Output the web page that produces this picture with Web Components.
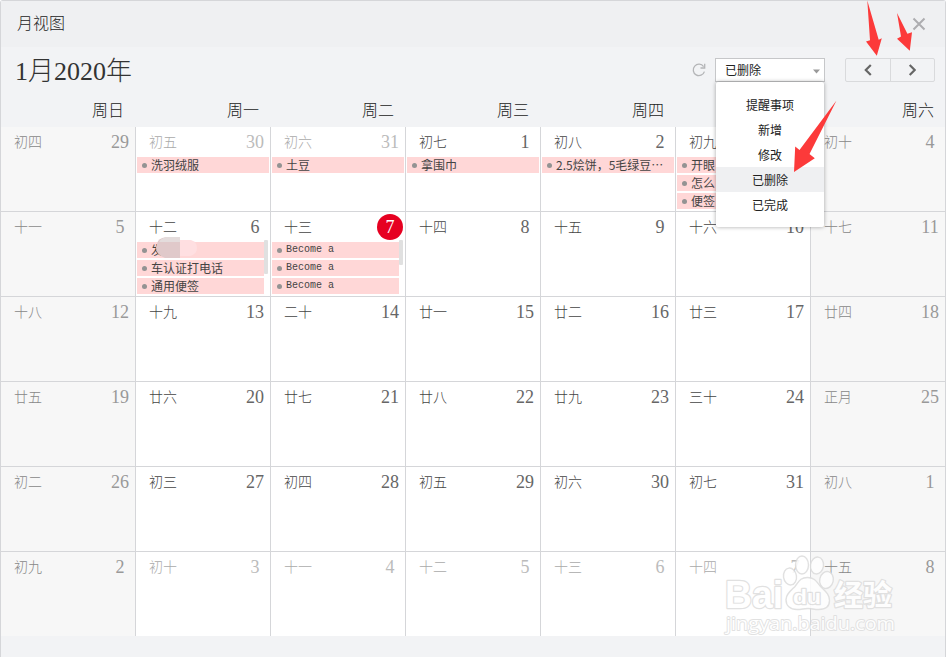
<!DOCTYPE html>
<html lang="zh-CN">
<head>
<meta charset="UTF-8">
<title>月视图</title>
<style>
    body {
        margin: 0;
        width: 946px;
        height: 657px;
        overflow: hidden;
        position: relative;
        font-family: "Liberation Serif", "Noto Sans CJK SC", serif;
        color: #333;
    }
</style>
</head>
<body>
<month-window heading="月视图">
    <calendar-toolbar slot="toolbar" heading="1月2020年"></calendar-toolbar>
    <month-grid slot="content"></month-grid>
</month-window>
<site-watermark></site-watermark>
<arrow-marks></arrow-marks>

<script>
class MonthWindow extends HTMLElement {
    constructor() {
        super();
        this.attachShadow({ mode: 'open' });
        this.shadowRoot.innerHTML = `
            <style>
                :host {
                    display: flex;
                    flex-direction: column;
                    box-sizing: border-box;
                    width: 946px;
                    height: 657px;
                    border: 1px solid #d5d6d9;
                    border-bottom: 0;
                    border-radius: 3px 3px 0 0;
                    background: #f2f3f5;
                }
                header {
                    display: flex;
                    justify-content: space-between;
                    align-items: center;
                    box-sizing: border-box;
                    height: 46px;
                    padding: 0 19px 4px 16px;
                    background: #eff0f2;
                    color: #222;
                    font: 300 16px/24px "Noto Sans CJK SC", sans-serif;
                }
                svg { display: block; margin-top: 4px; }
            </style>
            <header>
                <span>${this.getAttribute('heading')}</span>
                <svg width="14" height="14" viewBox="0 0 14 14" stroke="#adadb0" stroke-width="2">
                    <path d="M1.5 1.5l11 11M12.5 1.5l-11 11"/>
                </svg>
            </header>
            <slot name="toolbar"></slot>
            <slot name="content"></slot>
        `;
    }
}

class CalendarToolbar extends HTMLElement {
    constructor() {
        super();
        this.attachShadow({ mode: 'open' });
        this.shadowRoot.innerHTML = `
            <style>
                :host {
                    display: flex;
                    align-items: center;
                    box-sizing: border-box;
                    height: 46px;
                    padding: 0 10px 0 14px;
                }
                h1 {
                    flex: 1;
                    margin: 0;
                    padding-top: 3px;
                    font-size: 26px;
                    line-height: 43px;
                    font-weight: 300;
                }
                .refresh { display: block; margin-right: 9px; }
                filter-select { margin-right: 20px; }
                .nav {
                    display: flex;
                    box-sizing: border-box;
                    width: 90px;
                    height: 24px;
                    border: 1px solid #d9dadc;
                    border-radius: 2px;
                }
                .nav span {
                    flex: 1;
                    display: flex;
                    align-items: center;
                    justify-content: center;
                }
                .nav span + span { border-left: 1px solid #d9dadc; }
            </style>
            <h1>${this.getAttribute('heading')}</h1>
            <svg class="refresh" width="14" height="14" viewBox="0 0 14 14" fill="none" stroke="#b4b5b7" stroke-width="1.3">
                <path d="M12.4 8.6A5.7 5.7 0 1 1 11.6 3.6"/>
                <path d="M12.7 .8v4.2H8.5"/>
            </svg>
            <filter-select></filter-select>
            <div class="nav">
                <span><svg width="8" height="12" viewBox="0 0 8 12" fill="none" stroke="#666" stroke-width="2.2"><path d="M6.8 1L1.8 6l5 5"/></svg></span>
                <span><svg width="8" height="12" viewBox="0 0 8 12" fill="none" stroke="#666" stroke-width="2.2"><path d="M1.7 1l5 5-5 5"/></svg></span>
            </div>
        `;
    }
}

class FilterSelect extends HTMLElement {
    constructor() {
        super();
        this.attachShadow({ mode: 'open' });
        this.options = ['提醒事项', '新增', '修改', '已删除', '已完成'];
        this.value = '已删除';
        this.shadowRoot.innerHTML = `
            <style>
                :host {
                    display: block;
                    position: relative;
                    width: 110px;
                    font: 12px/25px "Noto Sans CJK SC", sans-serif;
                    color: #222;
                }
                .field {
                    display: flex;
                    align-items: center;
                    justify-content: space-between;
                    box-sizing: border-box;
                    height: 24px;
                    padding: 0 4px 0 9px;
                    border: 1px solid #c6c7c9;
                    background: #fff;
                    line-height: 22px;
                }
                .field span { margin-top: -1px; }
                .field svg { margin-top: 2px; }
                .menu {
                    position: absolute;
                    z-index: 5;
                    left: 1px;
                    top: 24px;
                    width: 108px;
                    padding: 10px 0;
                    border-radius: 2px;
                    background: #fff;
                    box-shadow: 0 0 4px rgba(0, 0, 0, .35);
                    text-align: center;
                }
                .selected { background: #eff0f2; }
            </style>
            <div class="field">
                <span>${this.value}</span>
                <svg width="7" height="5" viewBox="0 0 7 5"><path d="M0 .5h7L3.5 4.5z" fill="#999"/></svg>
            </div>
            <div class="menu">
                ${this.options.map(o => `<div class="${o === this.value ? 'selected' : ''}">${o}</div>`).join('')}
            </div>
        `;
    }
}

class MonthGrid extends HTMLElement {
    constructor() {
        super();
        this.attachShadow({ mode: 'open' });
        const weekdays = ['周日', '周一', '周二', '周三', '周四', '', '周六'];
        // lunar labels, one row per week
        const lunar = [
            '初四 初五 初六 初七 初八 初九 初十',
            '十一 十二 十三 十四 十五 十六 十七',
            '十八 十九 二十 廿一 廿二 廿三 廿四',
            '廿五 廿六 廿七 廿八 廿九 三十 正月',
            '初二 初三 初四 初五 初六 初七 初八',
            '初九 初十 十一 十二 十三 十四 十五'
        ].join(' ').split(' ');
        const events = {
            1: ['洗羽绒服'],
            2: ['土豆'],
            3: ['拿围巾'],
            4: ['2.5烩饼，5毛绿豆…'],
            5: ['开眼', '怎么', '便签'],
            8: ['发', '车认证打电话', '通用便签'],
            9: ['Become a', 'Become a', 'Become a']
        };
        const scroll = { 8: 34, 9: 25 };
        const start = new Date(2019, 11, 29);
        const cells = lunar.map((label, i) => {
            const date = new Date(start.getFullYear(), start.getMonth(), start.getDate() + i);
            const classes = [];
            if (i % 7 === 0 || i % 7 === 6) classes.push('weekend');
            if (date.getMonth() !== 0) classes.push('other');
            if (i === 9) classes.push('today');
            if (i >= 35) classes.push('last');
            return `
                <day-cell class="${classes.join(' ')}" lunar="${label}" day="${date.getDate()}" scroll="${scroll[i] || 0}">
                    ${(events[i] || []).map((t, n) => `<event-item${i === 8 && n === 0 ? ' smudged' : ''}${i === 9 ? ' latin' : ''}>${t}</event-item>`).join('')}
                </day-cell>`;
        });
        this.shadowRoot.innerHTML = `
            <style>
                :host { display: block; }
                .weekdays, .days {
                    display: grid;
                    grid-template-columns: repeat(6, 135px) 134px;
                }
                .weekdays {
                    height: 34px;
                    color: #222;
                    font: 300 16px/32px "Noto Sans CJK SC", sans-serif;
                }
                .weekdays span { padding-left: 91px; }
                .days { grid-template-rows: repeat(5, 85px) 84px; }
            </style>
            <div class="weekdays">${weekdays.map(d => `<span>${d}</span>`).join('')}</div>
            <div class="days">${cells.join('')}</div>
        `;
    }
}

class DayCell extends HTMLElement {
    constructor() {
        super();
        this.attachShadow({ mode: 'open' });
    }

    connectedCallback() {
        const thumb = Number(this.getAttribute('scroll'));
        this.shadowRoot.innerHTML = `
            <style>
                :host {
                    display: flex;
                    flex-direction: column;
                    box-sizing: border-box;
                    min-width: 0;
                    border-right: 1px solid #d5d6d9;
                    border-bottom: 1px solid #d5d6d9;
                    background: #fff;
                    color: #444;
                    --day-color: #666;
                }
                :host(.other) { color: #aaa; --day-color: #bbb; }
                :host(.weekend) { background: #f7f7f7; color: #888; --day-color: #999; }
                :host(:nth-child(7n)) { border-right: 0; }
                :host(.last) { border-bottom: 0; }
                .head {
                    display: flex;
                    justify-content: space-between;
                    height: 28px;
                    padding-left: 13px;
                }
                .lunar { font: 300 14px/28px "Noto Sans CJK SC", sans-serif; }
                .day {
                    width: 26px;
                    height: 26px;
                    margin: 2px 2px 0 0;
                    border-radius: 50%;
                    color: var(--day-color);
                    font-size: 18px;
                    line-height: 27px;
                    text-align: center;
                }
                :host(.today) .day { background: #e60021; color: #fff; }
                .body { display: flex; padding: 0 1px; }
                .list {
                    flex: 1;
                    display: flex;
                    flex-direction: column;
                    gap: 2px;
                    padding-top: 2px;
                }
                .thumb {
                    width: 4px;
                    margin-right: 1px;
                    border-radius: 1px;
                    background: #e0e0e0;
                }
            </style>
            <div class="head">
                <span class="lunar">${this.getAttribute('lunar')}</span>
                <span class="day">${this.getAttribute('day')}</span>
            </div>
            <div class="body">
                <div class="list"><slot></slot></div>
                ${thumb ? `<div class="thumb" style="height: ${thumb}px"></div>` : ''}
            </div>
        `;
    }
}

class EventItem extends HTMLElement {
    constructor() {
        super();
        this.attachShadow({ mode: 'open' });
        this.shadowRoot.innerHTML = `
            <style>
                :host {
                    display: flex;
                    align-items: center;
                    position: relative;
                    height: 16px;
                    background: #ffd7d7;
                    color: #444;
                    font: 12px/16px "Noto Sans CJK SC", sans-serif;
                    white-space: nowrap;
                }
                :host([latin]) { font: 10px/18px "Liberation Mono", monospace; }
                i {
                    width: 5px;
                    height: 5px;
                    margin: 1px 4px 0 5px;
                    border-radius: 50%;
                    background: #939393;
                }
                .smudge { display: none; }
                :host([smudged]) .smudge {
                    display: block;
                    position: absolute;
                    left: 18px;
                    top: -5px;
                }
            </style>
            <i></i><slot></slot>
            <svg class="smudge" width="43" height="22" viewBox="0 0 43 22">
                <path d="M23 3h13q6 2 6 8t-7 8H23z" fill="#ffdfe1"/>
                <path d="M3 4Q6 0 14 0h11v21H10Q1 18 1 10z" fill="#e0c9ca"/>
                <path d="M4 5Q7 0 14 0h11v5z" fill="#e4dcdc"/>
            </svg>
        `;
    }
}

class SiteWatermark extends HTMLElement {
    constructor() {
        super();
        this.attachShadow({ mode: 'open' });
        this.shadowRoot.innerHTML = `
            <style>
                :host {
                    position: absolute;
                    left: 720px;
                    top: 550px;
                    pointer-events: none;
                }
                svg { display: block; }
                text { paint-order: stroke; stroke-linejoin: round; }
            </style>
            <svg width="180" height="90" fill="#fff" stroke="#dcdcdc" stroke-width="2.4">
                <g opacity=".85">
                    <text x="5" y="58" font-family="Liberation Sans" font-weight="bold" font-size="38" textLength="58" lengthAdjust="spacingAndGlyphs">Bai</text>
                    <g stroke-width="1.4">
                        <ellipse cx="70" cy="26.5" rx="6.5" ry="8.5" transform="rotate(-8 70 26.5)"/>
                        <ellipse cx="82" cy="15" rx="6.5" ry="9"/>
                        <ellipse cx="97" cy="15.5" rx="6.5" ry="8.5" transform="rotate(8 97 15.5)"/>
                        <ellipse cx="106.5" cy="30" rx="6.8" ry="8.5" transform="rotate(12 106.5 30)"/>
                        <path d="M87.500 27.500c7 0 9 4 13 9 5 5 9 8 9 14 0 6-4 9-11 9-4 0-7-1-10.500-1s-7 1-11 1c-7 0-11-4-11-10 0-5 4-8 9-13 4-5 5-9 12.500-9z"/>
                    </g>
                    <text x="73" y="54" font-family="Liberation Sans" font-weight="bold" font-size="21" textLength="28" lengthAdjust="spacingAndGlyphs">du</text>
                    <text x="114" y="56" font-family="Noto Sans CJK SC" font-weight="bold" font-size="29">经验</text>
                    <text x="6" y="80" font-family="Open Sans" font-size="19" stroke-width="1.8" textLength="169" lengthAdjust="spacingAndGlyphs">jingyan.baidu.com</text>
                </g>
            </svg>
        `;
    }
}

class ArrowMarks extends HTMLElement {
    constructor() {
        super();
        this.attachShadow({ mode: 'open' });
        this.shadowRoot.innerHTML = `
            <style>
                :host {
                    position: absolute;
                    left: 780px;
                    top: 0;
                    z-index: 10;
                    pointer-events: none;
                }
                svg { display: block; }
            </style>
            <svg width="166" height="180" viewBox="780 0 166 180" fill="#fc3a3a">
                <path d="M867.3 .5L878.7 39.7 881.8 38.2 876.8 55.7 866 41.4 870 40.3z"/>
                <path d="M897 13L907.4 33.8 912 32.2 909.8 50.7 897 38.7 901 36.5z"/>
                <path d="M836.5 100.5L809.5 154 814.8 158.2 794 172 795.2 146.5 799.5 150z"/>
            </svg>
        `;
    }
}

customElements.define('month-window', MonthWindow);
customElements.define('filter-select', FilterSelect);
customElements.define('calendar-toolbar', CalendarToolbar);
customElements.define('event-item', EventItem);
customElements.define('day-cell', DayCell);
customElements.define('month-grid', MonthGrid);
customElements.define('site-watermark', SiteWatermark);
customElements.define('arrow-marks', ArrowMarks);
</script>
</body>
</html>
